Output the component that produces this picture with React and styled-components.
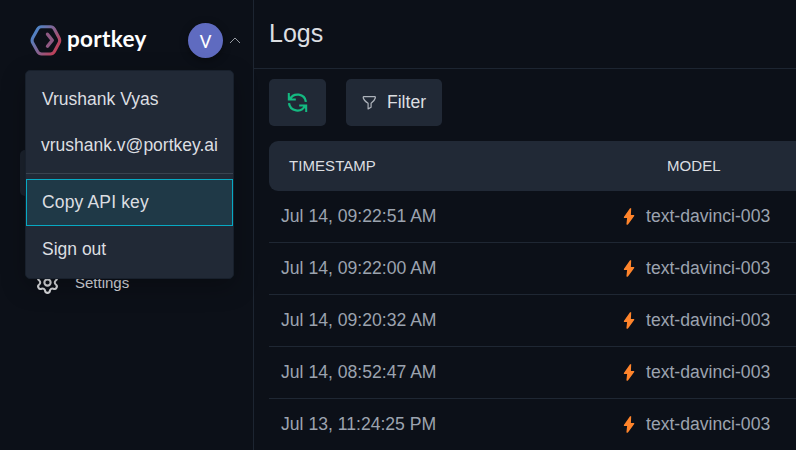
import React from "react";
import styled, { createGlobalStyle } from "styled-components";
import { Settings } from "lucide-react";

const Global = createGlobalStyle`
  * { box-sizing: border-box; }
  body { margin: 0; background: #0c1018; overflow: hidden; font-family: "Liberation Sans", Arial, sans-serif; }
`;
const Page = styled.div`
  display: grid; grid-template-columns: 254px 1fr; height: 450px; width: 796px;
  overflow: hidden; color: #dcdee1; background: #0c1018;
`;
const Sidebar = styled.aside`
  position: relative; border-right: 1px solid #1d2531; height: 450px;
`;
const Brand = styled.header`
  display: flex; align-items: center; height: 80px; padding-left: 30px;
  svg { flex: none; display: block; }
`;
const Wordmark = styled.span`
  width: 121px; margin-left: 5px; margin-top: -2px; color: #fff; white-space: nowrap;
  font: 700 22.5px/32px "Lato", sans-serif; letter-spacing: 0.3px;
`;
const Avatar = styled.span`
  display: grid; place-items: center; width: 35px; height: 35px; border-radius: 50%;
  background: #5f6bc0; color: #fff; font: 400 19px/37px Roboto, sans-serif;
  box-shadow: 0 2px 8px #0006; margin-right: 6px;
`;
const NavItem = styled.div`
  display: flex; align-items: center; gap: 15px; height: 46px; margin: 0 20px;
  padding-left: 15px; border-radius: 5px; font-size: 15px;
  background: ${(p) => (p.$active ? "#1b222d" : "transparent")};
  margin-top: ${(p) => p.$top}px;
`;
const Menu = styled.div`
  position: absolute; left: 25px; top: 70px; width: 209px; height: 209px;
  border: 1px solid #18202c; border-radius: 5px; background: #212936;
  box-shadow: 0 8px 24px #0004;
`;
const MenuItem = styled.div`
  height: ${(p) => p.$h || 46}px; padding-left: ${(p) => p.$inset || 16}px;
  display: flex; align-items: center; font-size: 17.5px; white-space: nowrap;
`;
const Selected = styled(MenuItem)`
  border: 1px solid #07a9c3; background: #1f3947; padding-left: 15px; letter-spacing: 0.15px;
`;
const Divider = styled.div`
  height: 1px; background: #394350; margin: 10px 0 5px;
`;
const Main = styled.main`min-width: 0;`;
const Title = styled.h1`
  margin: 0; height: 69px; padding-left: 15px; border-bottom: 1px solid #1d2531;
  font-size: 25px; font-weight: 400; line-height: 67px;
`;
const Toolbar = styled.div`
  display: flex; gap: 20px; padding: 10px 15px 15px;
`;
const Button = styled.button`
  display: flex; align-items: center; justify-content: center; gap: 11px;
  width: ${(p) => p.$w}px; height: 47px; padding: 0; border: 0; border-radius: 5px;
  background: #212936; color: #dcdee1; font: 17.6px "Liberation Sans", Arial, sans-serif;
`;
const Table = styled.section`margin-left: 15px;`;
const HeadRow = styled.div`
  display: grid; grid-template-columns: 378px 1fr; align-items: center; height: 50px;
  padding: 0 0 2px 20px; border-radius: 9px 0 0 9px; background: #212936; font-size: 15px;
  letter-spacing: 0.06px;
`;
const Row = styled.div`
  display: grid; grid-template-columns: 342px 1fr; align-items: center; height: 52px;
  padding-left: 12px; border-bottom: 1px solid #1f2733; color: #9ca3af; font-size: 17.6px;
`;
const Model = styled.div`
  display: flex; align-items: center; gap: 11px;
`;

const Logo = () => (
  <svg width="32" height="31" viewBox="0 0 32 31" fill="none" stroke="url(#brand)" strokeLinecap="round" strokeLinejoin="round">
    <defs>
      <linearGradient id="brand" x1="2" y1="5" x2="30" y2="24" gradientUnits="userSpaceOnUse">
        <stop stopColor="#428bd2" /><stop offset="1" stopColor="#c73b50" />
      </linearGradient>
    </defs>
    <path strokeWidth="3.1" d="M11.5 1.8H20.5Q23 1.8 24.3 4L29 12.8Q30.4 15.4 29 18L24.3 26.8Q23 29 20.5 29H11.5Q9 29 7.7 26.8L2.8 18Q1.4 15.4 2.8 12.8L7.7 4Q9 1.8 11.5 1.8Z" />
    <path strokeWidth="3.4" stroke="#8f5983" d="M17.5 9.2L22.3 15.2L17.5 21.2" />
  </svg>
);
const Chevron = () => (
  <svg width="12" height="7" viewBox="0 0 12 7" fill="none" stroke="#969aa1"><path d="M1 6L6 1L11 6" /></svg>
);
const Refresh = () => (
  <svg width="21" height="21" viewBox="0 0 21 21" fill="none" stroke="#14b981" strokeWidth="2.3">
    <path d="M3 7.4A8.4 8.4 0 0 1 18.9 9.8M2 11.2A8.4 8.4 0 0 0 18 13.6" />
    <path fill="#14b981" stroke="none" d="M.8 1H2.8V4.2L5 6.4H8.8V8.6H.8ZM20.2 20H18.2V16.8L16 14.6H12.2V12.4H20.2Z" />
  </svg>
);
const Funnel = () => (
  <svg width="14" height="15" viewBox="0 0 14 15" fill="none" stroke="#adb2ba" strokeWidth="1.2" strokeLinejoin="round">
    <path d="M1.7 1.6H12.9Q13.5 1.6 13.3 3Q12.8 5.3 9.1 8.3V12.3L6.1 13.9V8.3Q1.8 5.3 1.3 3Q1.1 1.6 1.7 1.6Z" />
  </svg>
);
const Bolt = () => (
  <svg width="12" height="18" viewBox="0 0 12 18" fill="#ff842b"><path d="M8.2 .3H7L.9 9V10.1H4.1L3.4 16.4 4.8 16.8 11.2 8.1V6.9H7.9Z" /></svg>
);

const times = ["Jul 14, 09:22:51 AM", "Jul 14, 09:22:00 AM", "Jul 14, 09:20:32 AM", "Jul 14, 08:52:47 AM", "Jul 13, 11:24:25 PM"];

export default function App() {
  return (
    <Page>
      <Global />
      <Sidebar>
        <Brand><Logo /><Wordmark>portkey</Wordmark><Avatar>V</Avatar><Chevron /></Brand>
        <NavItem $active $top={70} />
        <NavItem $top={63}><Settings size={25} strokeWidth={2} />Settings</NavItem>
        <Menu>
          <MenuItem $h={56}>Vrushank Vyas</MenuItem>
          <MenuItem $h={36} $inset={15}>vrushank.v@portkey.ai</MenuItem>
          <Divider />
          <Selected $h={47}>Copy API key</Selected>
          <MenuItem>Sign out</MenuItem>
        </Menu>
      </Sidebar>
      <Main>
        <Title>Logs</Title>
        <Toolbar>
          <Button $w={57} aria-label="Refresh"><Refresh /></Button>
          <Button $w={96}><Funnel />Filter</Button>
        </Toolbar>
        <Table>
          <HeadRow><span>TIMESTAMP</span><span>MODEL</span></HeadRow>
          {times.map((time) => (
            <Row key={time}><span>{time}</span><Model><Bolt />text-davinci-003</Model></Row>
          ))}
        </Table>
      </Main>
    </Page>
  );
}
